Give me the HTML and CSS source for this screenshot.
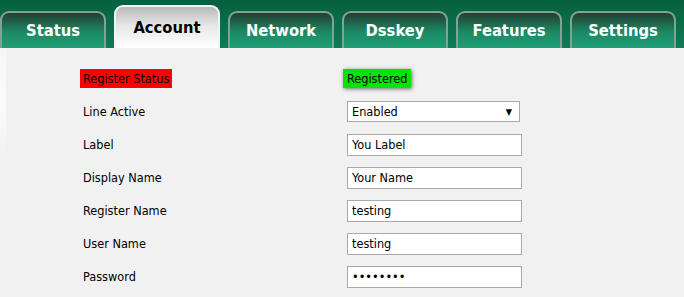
FILE: index.html
```html
<!DOCTYPE html>
<html lang="en">
<head>
    <meta charset="UTF-8">
    <title>Account</title>
    <link rel="stylesheet" href="styles.css">
</head>
<body>
    <div class="tabbar">
        <div class="tab">Status</div>
        <div class="tab active">Account</div>
        <div class="tab">Network</div>
        <div class="tab">Dsskey</div>
        <div class="tab">Features</div>
        <div class="tab">Settings</div>
    </div>
    <div class="page">
        <div class="side"></div>
        <div class="form">
            <div class="row">
                <div class="label"><span class="bad">Register Status</span></div>
                <div class="value"><span class="good">Registered</span></div>
            </div>
            <div class="row">
                <div class="label">Line Active</div>
                <div class="value">
                    <div class="select">Enabled <span class="arrow">&#9660;</span></div>
                </div>
            </div>
            <div class="row">
                <div class="label">Label</div>
                <div class="value"><input type="text" value="You Label"></div>
            </div>
            <div class="row">
                <div class="label">Display Name</div>
                <div class="value"><input type="text" value="Your Name"></div>
            </div>
            <div class="row">
                <div class="label">Register Name</div>
                <div class="value"><input type="text" value="testing"></div>
            </div>
            <div class="row">
                <div class="label">User Name</div>
                <div class="value"><input type="text" value="testing"></div>
            </div>
            <div class="row">
                <div class="label">Password</div>
                <div class="value"><input type="password" value="12345678"></div>
            </div>
        </div>
    </div>
</body>
</html>
```

FILE: styles.css
```css
body {
    margin: 0;
    background: #f1f1f1;
    font-family: "DejaVu Sans Condensed", "DejaVu Sans", sans-serif;
    font-stretch: condensed;
    font-size: 12.6px;
    color: #000;
    overflow: hidden;
}
.tabbar {
    height: 48px;
    background: linear-gradient(#075f3f, #0f7c56);
    display: flex;
    align-items: flex-end;
    gap: 8px;
}
.tab {
    width: 102px;
    height: 35px;
    border: 2px solid #7fa394;
    border-bottom: none;
    border-radius: 9px 9px 0 0;
    background: linear-gradient(#233f33, #1b8a64 55%, #1f9e77);
    color: #fff;
    font-weight: bold;
    font-size: 16.4px;
    display: flex;
    align-items: center;
    justify-content: center;
    box-sizing: content-box;
}
.tab.active {
    width: 106px;
    height: 43px;
    box-sizing: border-box;
    border-color: #f4f4f4;
    background: linear-gradient(#b9b9b9, #e6e6e6 45%, #fff);
    color: #000;
    padding-bottom: 1px;
}
.page {
    display: flex;
}
.side {
    width: 6px;
    height: 110px;
    background: linear-gradient(#f6f6f6, #fbfbfb 50%, #f1f1f1);
}
.form {
    padding: 14px 0 0 77px;
}
.row {
    display: grid;
    grid-template-columns: 264px 180px;
    height: 33px;
    align-items: center;
}
.bad {
    background: #ff0000;
    padding: 2px 3px;
    margin-left: -3px;
}
.good {
    background: #00e600;
    padding: 2px 4px;
    margin-left: -4px;
    box-shadow: 1px 1px 4px rgba(0, 0, 0, 0.55);
}
.select {
    width: 167px;
    height: 19px;
    border: 1px solid #a9a9a9;
    background: #fff;
    display: flex;
    align-items: center;
    justify-content: space-between;
    padding-left: 4px;
}
.arrow {
    font-size: 9px;
    margin-right: 7px;
}
input {
    width: 175px;
    height: 22px;
    box-sizing: border-box;
    border: 1px solid #a9a9a9;
    background: #fff;
    font-family: inherit;
    font-stretch: condensed;
    font-size: 12.6px;
    padding: 0 4px;
    margin: 0;
}
```
